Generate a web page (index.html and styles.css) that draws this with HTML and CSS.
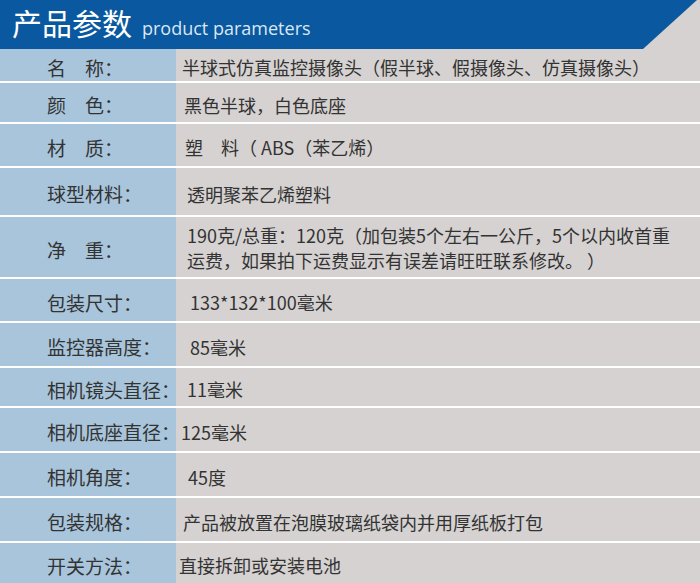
FILE: index.html
```html
<!DOCTYPE html>
<html lang="zh-CN">
<head>
<meta charset="utf-8">
<title>产品参数</title>
<link rel="stylesheet" href="styles.css">
</head>
<body>
<div class="sheet">
  <header class="banner">
    <span class="title-cn">产品参数</span>
    <span class="title-en">product parameters</span>
  </header>
  <div class="specs">
    <div class="row h32">
      <div class="label">名　称：</div>
      <div class="value pad-6">半球式仿真监控摄像头（假半球、假摄像头、仿真摄像头）</div>
    </div>
    <div class="row h39">
      <div class="label">颜　色：</div>
      <div class="value pad-8">黑色半球，白色底座</div>
    </div>
    <div class="row h42">
      <div class="label">材　质：</div>
      <div class="value pad-9">塑　料（ ABS（苯乙烯）</div>
    </div>
    <div class="row h47">
      <div class="label">球型材料：</div>
      <div class="value pad-11">透明聚苯乙烯塑料</div>
    </div>
    <div class="row h60">
      <div class="label">净　重：</div>
      <div class="value pad-11 multi">190克/总重：120克（加包装5个左右一公斤，5个以内收首重<br>运费，如果拍下运费显示有误差请旺旺联系修改。 ）</div>
    </div>
    <div class="row h42">
      <div class="label">包装尺寸：</div>
      <div class="value pad-14">133*132*100毫米</div>
    </div>
    <div class="row h43">
      <div class="label">监控器高度：</div>
      <div class="value pad-14">85毫米</div>
    </div>
    <div class="row h38">
      <div class="label">相机镜头直径：</div>
      <div class="value pad-11">11毫米</div>
    </div>
    <div class="row h43">
      <div class="label">相机底座直径：</div>
      <div class="value pad-5">125毫米</div>
    </div>
    <div class="row h43">
      <div class="label">相机角度：</div>
      <div class="value pad-12">45度</div>
    </div>
    <div class="row h43">
      <div class="label">包装规格：</div>
      <div class="value pad-7">产品被放置在泡膜玻璃纸袋内并用厚纸板打包</div>
    </div>
    <div class="row h40">
      <div class="label">开关方法：</div>
      <div class="value pad-3">直接拆卸或安装电池</div>
    </div>
  </div>
</div>
</body>
</html>
```

FILE: styles.css
```css
* {
  box-sizing: border-box;
}

html, body {
  margin: 0;
  padding: 0;
}

body {
  background: #d5d2d1;
  font-family: "Noto Sans CJK SC", "Noto Sans", sans-serif;
  color: #333333;
  width: 700px;
  height: 583px;
  overflow: hidden;
}

.sheet {
  width: 700px;
}

.banner {
  height: 49px;
  background: #0a589f;
  clip-path: polygon(0 0, 697px 0, 643px 100%, 0 100%);
  display: flex;
  align-items: baseline;
  padding: 7px 0 0 12px;
}

.title-cn {
  font-size: 30px;
  line-height: 30px;
  color: #ffffff;
}

.title-en {
  font-family: "Open Sans", "Noto Sans", sans-serif;
  font-size: 18px;
  color: #dbe7f3;
  margin-left: 10px;
}

.specs {
  display: flex;
  flex-direction: column;
}

.row {
  display: grid;
  grid-template-columns: 176px 1fr;
  box-sizing: content-box;
}

.row + .row {
  border-top: 2px solid #ffffff;
}

.h32 { height: 32px; }
.h38 { height: 38px; }
.h39 { height: 39px; }
.h40 { height: 40px; }
.h42 { height: 42px; }
.h43 { height: 43px; }
.h47 { height: 47px; }
.h60 { height: 60px; }

.label,
.value {
  display: flex;
  align-items: center;
  padding-top: 4px;
  white-space: nowrap;
}

.label {
  background: #a8c5db;
  padding-left: 47px;
  font-size: 19px;
}

.value {
  background: #d5d2d1;
  font-size: 18px;
}

.multi {
  line-height: 25px;
  padding-top: 2px;
}

.pad-3 { padding-left: 3px; }
.pad-5 { padding-left: 5px; }
.pad-6 { padding-left: 6px; }
.pad-7 { padding-left: 7px; }
.pad-8 { padding-left: 8px; }
.pad-9 { padding-left: 9px; }
.pad-11 { padding-left: 11px; }
.pad-12 { padding-left: 12px; }
.pad-14 { padding-left: 14px; }
```
